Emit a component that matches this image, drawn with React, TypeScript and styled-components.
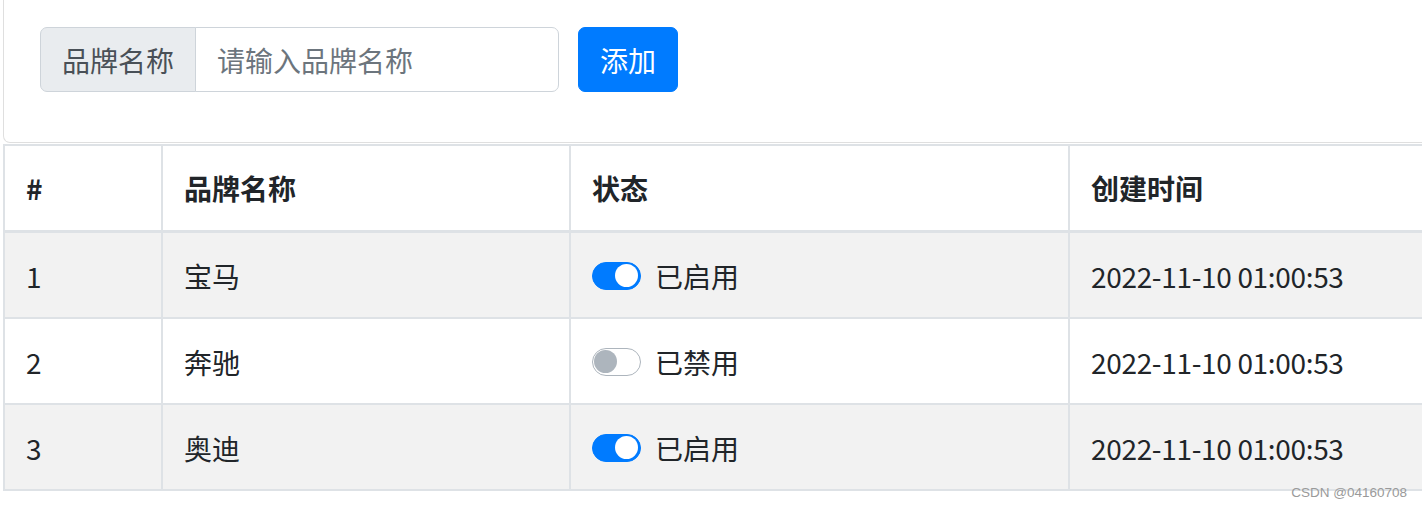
import React from 'react';
import styled, { createGlobalStyle } from 'styled-components';

interface Brand {
  id: number;
  brandName: string;
  enabled: boolean;
  createTime: string;
}

const brands: Brand[] = [
  { id: 1, brandName: '宝马', enabled: true, createTime: '2022-11-10 01:00:53' },
  { id: 2, brandName: '奔驰', enabled: false, createTime: '2022-11-10 01:00:53' },
  { id: 3, brandName: '奥迪', enabled: true, createTime: '2022-11-10 01:00:53' }
];

const GlobalStyle = createGlobalStyle`
  html, body {
    margin: 0;
    padding: 0;
    background: #fff;
    overflow: hidden;
  }

  body {
    font-family: "Noto Sans CJK SC", "Open Sans", sans-serif;
    color: #212529;
  }
`;

const Page = styled.div`
  position: relative;
  width: 100vw;
  min-height: 100vh;
  padding-left: 3px;
  box-sizing: border-box;
  overflow: hidden;
`;

const FormCard = styled.div`
  width: 1440px;
  box-sizing: border-box;
  border: 1px solid rgba(0, 0, 0, 0.125);
  border-top: none;
  border-radius: 0 0 7px 7px;
  padding: 27px 36px 50px;
  display: flex;
  align-items: center;
`;

const InputGroup = styled.div`
  display: flex;
  width: 519px;
  height: 65px;
`;

const GroupLabel = styled.span`
  display: flex;
  align-items: center;
  padding: 0 21px;
  font-size: 28px;
  color: #495057;
  background: #e9ecef;
  border: 1px solid #ced4da;
  border-radius: 7px 0 0 7px;
`;

const TextInput = styled.input`
  flex: 1;
  min-width: 0;
  margin-left: -1px;
  padding: 0 21px;
  font-family: inherit;
  font-size: 28px;
  color: #495057;
  border: 1px solid #ced4da;
  border-radius: 0 7px 7px 0;
  outline: none;

  &::placeholder {
    color: #6c757d;
  }
`;

const AddButton = styled.button`
  margin-left: 19px;
  height: 65px;
  padding: 0 21px;
  font-family: inherit;
  font-size: 28px;
  color: #fff;
  background: #007bff;
  border: 1px solid #007bff;
  border-radius: 7px;
`;

const Table = styled.table`
  width: 1440px;
  margin-top: 1px;
  border-collapse: collapse;
  table-layout: fixed;
  font-size: 28px;

  th,
  td {
    border: 2px solid #dee2e6;
    padding: 21px;
    line-height: 42px;
    text-align: left;
    vertical-align: middle;
  }

  th {
    font-weight: 700;
    padding-top: 21px;
    padding-bottom: 21px;
  }

  thead th {
    border-bottom-width: 3px;
  }

  tbody tr:nth-child(odd) {
    background: #f2f2f2;
  }

  td {
    padding-top: 22px;
    padding-bottom: 20px;
  }
`;

const DateText = styled.span`
  letter-spacing: -0.33px;
`;

const StatusBox = styled.div`
  display: flex;
  align-items: center;
  gap: 14px;
`;

const Switch = styled.span<{ $on: boolean }>`
  position: relative;
  flex: none;
  width: 49px;
  height: 28px;
  box-sizing: border-box;
  border-radius: 14px;
  border: 1.5px solid ${(p) => (p.$on ? '#007bff' : '#adb5bd')};
  background: ${(p) => (p.$on ? '#007bff' : '#fff')};

  &::after {
    content: '';
    position: absolute;
    top: 1px;
    left: ${(p) => (p.$on ? '22px' : '1px')};
    width: 23px;
    height: 23px;
    border-radius: 50%;
    background: ${(p) => (p.$on ? '#fff' : '#adb5bd')};
  }
`;

const Watermark = styled.span`
  position: absolute;
  right: 15px;
  bottom: 6px;
  font-family: "Liberation Sans", Arial, sans-serif;
  font-size: 13.5px;
  color: #9a9a9a;
`;

export default function App() {
  return (
    <Page>
      <GlobalStyle />
      <FormCard>
        <InputGroup>
          <GroupLabel>品牌名称</GroupLabel>
          <TextInput placeholder='请输入品牌名称' />
        </InputGroup>
        <AddButton>添加</AddButton>
      </FormCard>

      <Table>
        <colgroup>
          <col style={{ width: 158 }} />
          <col style={{ width: 408 }} />
          <col style={{ width: 499 }} />
          <col />
        </colgroup>
        <thead>
          <tr>
            <th>#</th>
            <th>品牌名称</th>
            <th>状态</th>
            <th>创建时间</th>
          </tr>
        </thead>
        <tbody>
          {brands.map((brand) => (
            <tr key={brand.id}>
              <td>{brand.id}</td>
              <td>{brand.brandName}</td>
              <td>
                <StatusBox>
                  <Switch $on={brand.enabled} />
                  {brand.enabled ? '已启用' : '已禁用'}
                </StatusBox>
              </td>
              <td>
                <DateText>{brand.createTime}</DateText>
              </td>
            </tr>
          ))}
        </tbody>
      </Table>

      <Watermark>CSDN @04160708</Watermark>
    </Page>
  );
}
